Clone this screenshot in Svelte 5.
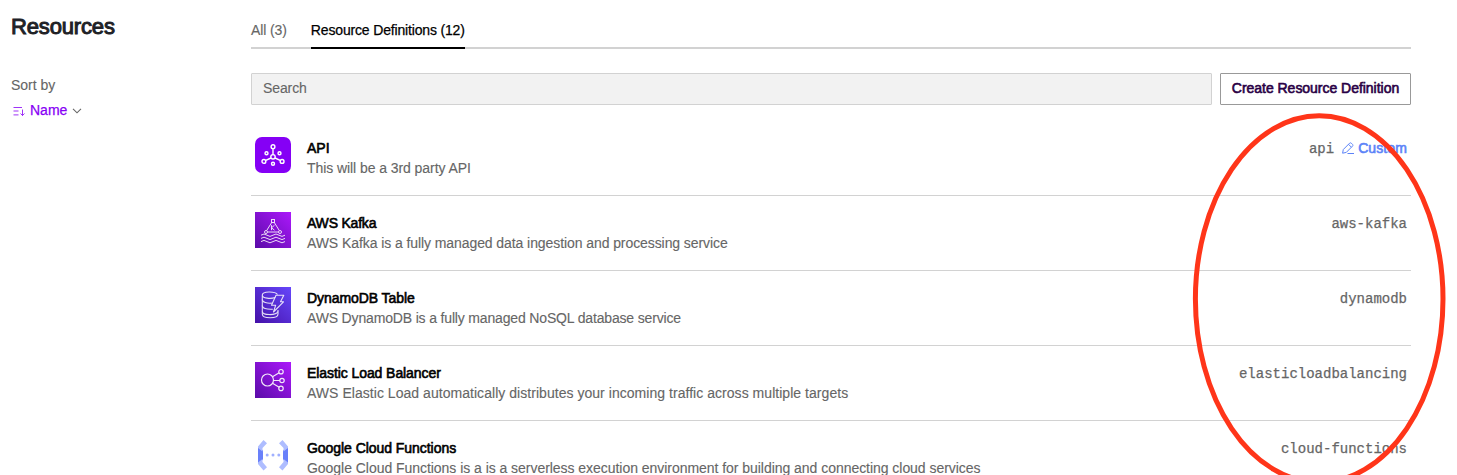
<script>
  const resources = [
    { icon: 'api', name: 'API', text: 'This will be a 3rd party API', type: 'api', custom: true, ns: 0, ts: -0.07 },
    { icon: 'kafka', name: 'AWS Kafka', text: 'AWS Kafka is a fully managed data ingestion and processing service', type: 'aws-kafka', ns: -0.2, ts: -0.08 },
    { icon: 'dynamo', name: 'DynamoDB Table', text: 'AWS DynamoDB is a fully managed NoSQL database service', type: 'dynamodb', ns: -0.07, ts: -0.16 },
    { icon: 'elb', name: 'Elastic Load Balancer', text: 'AWS Elastic Load automatically distributes your incoming traffic across multiple targets', type: 'elasticloadbalancing', ns: -0.08, ts: 0.04 },
    { icon: 'gcf', name: 'Google Cloud Functions', text: 'Google Cloud Functions is a is a serverless execution environment for building and connecting cloud services', type: 'cloud-functions', ns: -0.05, ts: -0.04 }
  ];
</script>

<div class="page">
  <aside>
    <h1>Resources</h1>
    <div class="sort-label">Sort by</div>
    <div class="sort">
      <svg width="12" height="12" viewBox="0 0 12 12" fill="none" stroke="#8700f5" stroke-width="1"><path d="M.5 2.500h8.500M.5 6h5M.5 9.900h5" opacity=".8"/><path d="M9.500 4.500v6M7.500 8.500l2 2 2-2" opacity=".8"/></svg>
      <span>Name</span>
      <svg class="chev" width="10" height="6" viewBox="0 0 10 6" fill="none" stroke="#666" stroke-width="1.1"><path d="M1 .8l4 4 4-4"/></svg>
    </div>
  </aside>

  <main>
    <nav>
      <span class="tab">All (3)</span>
      <span class="tab active">Resource Definitions (12)</span>
    </nav>
    <div class="tools">
      <div class="search">Search</div>
      <button><span>Create Resource Definition</span></button>
    </div>
    {#each resources as r}
      <div class="row">
        <svg class="icon" width="36" height="36" viewBox="0 0 36 36" fill="none">
          <defs>
            <linearGradient id="purple" x1="0" y1="1" x2="1" y2="0"><stop offset="0" stop-color="#5a0ca8"/><stop offset="1" stop-color="#ac18fb"/></linearGradient>
            <linearGradient id="indigo" x1="0" y1="1" x2="1" y2="0"><stop offset="0" stop-color="#4510a8"/><stop offset="1" stop-color="#6647fb"/></linearGradient>
          </defs>
          {#if r.icon === 'api'}
            <rect width="36" height="36" rx="7" fill="#8500f5"/>
            <g stroke="#fff" stroke-width="1.4">
              <path d="M18 11.500v6.200M16 21l-5.200 2.400M20 21l5.200 2.400"/>
              <circle cx="18" cy="9.700" r="1.900"/><circle cx="18" cy="19.800" r="2.200"/><circle cx="8.900" cy="24.400" r="1.900"/><circle cx="27.100" cy="24.400" r="1.900"/>
              <circle cx="11.500" cy="16.300" r="1.500"/><circle cx="24.500" cy="16.300" r="1.500"/><circle cx="18" cy="26.700" r="1.500"/>
            </g>
          {:else if r.icon === 'kafka'}
            <rect width="36" height="36" fill="url(#purple)"/>
            <g stroke="#fff" stroke-width="1" opacity=".85">
              <path d="M16.700 10.500l-5 8M19.300 10.500l5 8M12.500 20h11M16.500 13.200v5M19.500 13.200l-3 2.600 3 2.400"/>
              <rect x="16.500" y="7.500" width="3" height="3"/><circle cx="11" cy="20" r="1.500"/><circle cx="25" cy="20" r="1.500"/>
              <path d="M6 23.200q3-2.400 6 0t6 0 6 0 6 0M6 26.400q3-2.400 6 0t6 0 6 0 6 0M6 29.600q3-2.400 6 0t6 0 6 0 6 0"/>
            </g>
          {:else if r.icon === 'dynamo'}
            <rect width="36" height="36" fill="url(#indigo)"/>
            <g stroke="#fff" stroke-width="1.100" opacity=".85" stroke-linejoin="round">
              <path d="M22.500 7.500C20 3.900 7.300 4.100 7.300 8c0 3.500 8.500 4 13 2.500M7.300 8v19c0 5 15.700 5 15.700 0v-4"/>
              <path d="M7.300 12.500c0 3 5 4 9.500 3.600M7.300 18.500c0 3 4 4 10.500 3.700M7.300 24.500c0 4 14 4.200 15.700 0"/>
              <path d="M21 8.300h7.800l-3.300 6.500h3L18.500 25l2.200-6.800H16.500z"/>
            </g>
          {:else if r.icon === 'elb'}
            <rect width="36" height="36" fill="url(#purple)"/>
            <g stroke="#fff" stroke-width="1.200" opacity=".9">
              <circle cx="12.500" cy="18" r="6"/><path d="M17.500 14.700l6.700-3.900M18.500 18.500h6.300M17.500 21.300l6.700 3.900"/>
              <circle cx="26" cy="9.700" r="2.200"/><circle cx="27" cy="18.500" r="2.200"/><circle cx="26" cy="26.400" r="2.200"/>
            </g>
          {:else}
            <path d="M3 10l5 3.500v9L3 27z" fill="#6980fa"/><path d="M33 10l-5 3.500v9l5 4.500z" fill="#6980fa"/>
            <path d="M8.500 3L12 6.200 7.500 11v3.500L3 11V9.500zM27.500 3L24 6.200l4.500 4.800v3.500L33 11V9.500zM8.500 33.500L12 30.300 7.500 25v-3L3 25.500V27zM27.500 33.500L24 30.300l4.500-5.300v-3l4.500 3.500V27z" fill="#aebdff"/>
            <g fill="#a0b0ff"><circle cx="12.200" cy="18" r="1.500"/><circle cx="18" cy="18" r="1.500"/><circle cx="23.800" cy="18" r="1.500"/></g>
          {/if}
        </svg>
        <div class="copy">
          <div class="name" style:letter-spacing="{r.ns}px">{r.name}</div>
          <div class="text" style:letter-spacing="{r.ts}px">{r.text}</div>
        </div>
        <div class="type">
          <code>{r.type}</code>
          {#if r.custom}
            <svg width="12" height="12" viewBox="0 0 12 12" fill="none" stroke="#5c83f8" stroke-width="1" stroke-linejoin="round"><path d="M.6 11.200l.7-3.700L7.600 1.200c.5-.5 1.200-.5 1.700 0l1.200 1.200c.5.5.5 1.200 0 1.700L4.300 10.400zM6.500 2.300l2.900 2.900M5.500 11.500h6.500"/></svg>
            <b>Custom</b>
          {/if}
        </div>
      </div>
    {/each}
  </main>
  <svg class="mark" width="1457" height="475" viewBox="0 0 1457 475"><ellipse cx="1319.200" cy="299" rx="123.800" ry="183.300" fill="none" stroke="#ff3519" stroke-width="5"/></svg>
</div>

<style>
  :global(body) { margin: 0; background: #fff; }
  .page { position: relative; display: flex; width: 1457px; height: 475px; overflow: hidden; font: 14px/20px "Liberation Sans", Arial, sans-serif; color: #666; -webkit-text-stroke: .12px; }
  aside { width: 251px; flex: none; box-sizing: border-box; padding: 13px 0 0 11px; }
  h1 { margin: 0 0 34px; font-size: 22px; line-height: 28px; font-weight: 400; letter-spacing: -.15px; color: #202126; -webkit-text-stroke: 1px; }
  .sort-label { height: 25px; }
  .sort { display: flex; align-items: center; color: #8700f5; padding-left: 2px; height: 20px; }
  .sort span { margin: 0 5px; -webkit-text-stroke: .25px; }
  .sort svg { margin-top: 2px; }
  main { width: 1160px; flex: none; }
  nav { display: flex; gap: 24px; height: 49px; box-sizing: border-box; padding-top: 20px; box-shadow: inset 0 -2px #d2d2d2; }
  .tab { white-space: nowrap; box-sizing: border-box; height: 29px; letter-spacing: -.1px; }
  .tab.active { color: #000; -webkit-text-stroke: .25px; letter-spacing: -.165px; border-bottom: 2px solid #000; }
  .tools { display: flex; gap: 8px; padding-top: 24px; height: 32px; }
  .search { flex: 1; box-sizing: border-box; border: 1px solid #d2d2d2; border-radius: 1px; background: #f2f2f2; padding: 4px 11px; letter-spacing: -.1px; }
  button { width: 191px; padding: 0 0 2px; border: 1px solid #999; border-radius: 1px; background: #fff; color: #290045; font: 14px/20px "Liberation Sans", Arial, sans-serif; letter-spacing: -.03px; -webkit-text-stroke: .6px; white-space: nowrap; }
  .row { display: flex; height: 75px; box-sizing: border-box; border-bottom: 1px solid #d2d2d2; padding: 16px 4px 0; }
  .tools + .row { height: 91px; padding-top: 32px; }
  .icon { flex: none; margin-right: 16px; }
  .copy { flex: 1; margin-top: 1px; white-space: nowrap; }
  .name { color: #000; -webkit-text-stroke: .6px; }
  .text { width: max-content; }
  .type { display: flex; height: 20px; margin-top: 1px; align-items: center; }
  code { font: 14px/20px "Liberation Mono", monospace; padding-top: 1px; -webkit-text-stroke: .25px; }
  .type svg { margin: 0 4px 0 8px; }
  b { color: #5c83f8; font-weight: 400; letter-spacing: .1px; -webkit-text-stroke: .6px; }
  .mark { position: absolute; left: 0; top: 0; pointer-events: none; }
</style>
